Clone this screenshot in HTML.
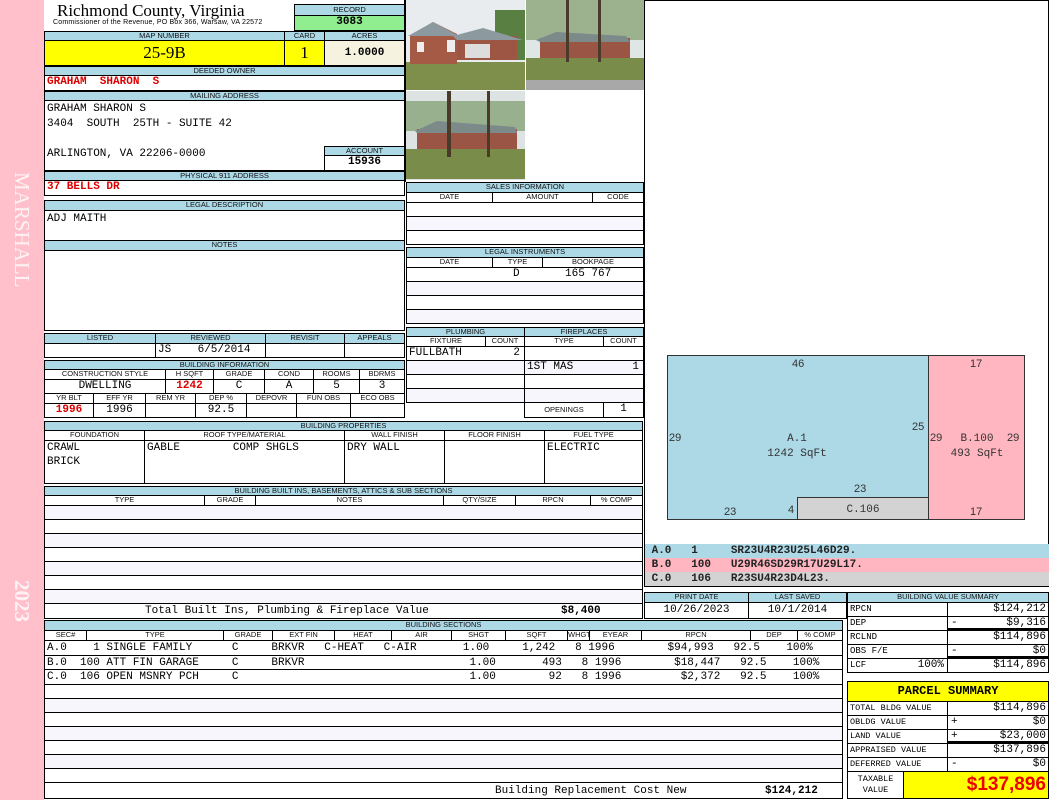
<!DOCTYPE html>
<html><head><meta charset="utf-8"><style>
*{box-sizing:border-box;margin:0;padding:0}
body{width:1050px;height:800px;background:#fff;position:relative;overflow:hidden;font-family:"Liberation Mono",monospace}
.side{position:absolute;left:0;top:0;width:44px;height:800px;background:#ffc0cb}
.vt{position:absolute;color:#fff;font-family:"Liberation Serif",serif;font-size:21px;transform:rotate(90deg);transform-origin:left top;white-space:nowrap;opacity:.8}
.c{position:absolute;border:1px solid #000;font-size:11px;line-height:13px;white-space:nowrap;overflow:hidden;padding:0 2px}
.h{position:absolute;border:1px solid #000;background:#add8e6;font:7.5px/8px "Liberation Sans",sans-serif;text-align:center;white-space:nowrap;overflow:hidden;color:#111}
.s{background:#fff}
.ctr{text-align:center}.r{text-align:right}
.red{color:#d00;font-weight:bold}
.alt{background:#f6f6fc}
</style></head><body>
<div class="side"></div>
<div class="vt" style="left:34px;top:172px">MARSHALL</div>
<div class="vt" style="left:34px;top:580px;font-weight:bold">2023</div>

<div style="position:absolute;left:57px;top:2px;font:17px/18px 'Liberation Serif',serif">Richmond County, Virginia</div>
<div style="position:absolute;left:53px;top:19px;font:7px/8px 'Liberation Sans',sans-serif;letter-spacing:.2px">Commissioner of the Revenue, PO Box 366, Warsaw, VA 22572</div>
<div class="h" style="left:294px;top:4px;width:111px;height:12px;line-height:10px">RECORD</div>
<div class="c ctr" style="left:294px;top:15px;width:111px;height:16px;background:#90ee90;font-weight:bold">3083</div>

<div class="h" style="left:44px;top:31px;width:241px;height:10px">MAP NUMBER</div>
<div class="h" style="left:284px;top:31px;width:41px;height:10px">CARD</div>
<div class="h" style="left:324px;top:31px;width:81px;height:10px">ACRES</div>
<div class="c ctr" style="left:44px;top:40px;width:241px;height:26px;background:#ff0;font:17px/24px 'Liberation Serif',serif">25-9B</div>
<div class="c ctr" style="left:284px;top:40px;width:41px;height:26px;background:#ff0;font:17px/24px 'Liberation Serif',serif">1</div>
<div class="c ctr" style="left:324px;top:40px;width:81px;height:26px;background:#f5f3e0;font-weight:bold;line-height:24px">1.0000</div>

<div class="h" style="left:44px;top:66px;width:361px;height:10px">DEEDED OWNER</div>
<div class="c red" style="left:44px;top:75px;width:361px;height:16px;white-space:pre">GRAHAM  SHARON  S</div>
<div class="h" style="left:44px;top:91px;width:361px;height:10px">MAILING ADDRESS</div>
<div class="c" style="left:44px;top:100px;width:361px;height:71px;line-height:15px;padding-top:1px;white-space:pre">GRAHAM SHARON S
3404  SOUTH  25TH - SUITE 42

ARLINGTON, VA 22206-0000</div>
<div class="h" style="left:324px;top:146px;width:81px;height:10px">ACCOUNT</div>
<div class="c ctr" style="left:324px;top:155px;width:81px;height:16px;font-weight:bold;background:#fff">15936</div>
<div class="h" style="left:44px;top:171px;width:361px;height:10px">PHYSICAL 911 ADDRESS</div>
<div class="c red" style="left:44px;top:180px;width:361px;height:16px">37 BELLS DR</div>
<div class="h" style="left:44px;top:200px;width:361px;height:11px">LEGAL DESCRIPTION</div>
<div class="c" style="left:44px;top:210px;width:361px;height:31px;padding-top:2px">ADJ MAITH</div>
<div class="h" style="left:44px;top:240px;width:361px;height:11px">NOTES</div>
<div class="c" style="left:44px;top:250px;width:361px;height:81px"></div>

<div class="h" style="left:44px;top:333px;width:112px;height:11px">LISTED</div>
<div class="h" style="left:155px;top:333px;width:111px;height:11px">REVIEWED</div>
<div class="h" style="left:265px;top:333px;width:80px;height:11px">REVISIT</div>
<div class="h" style="left:344px;top:333px;width:61px;height:11px">APPEALS</div>
<div class="c" style="left:44px;top:343px;width:112px;height:15px"></div>
<div class="c" style="left:155px;top:343px;width:111px;height:15px">JS&nbsp;&nbsp;&nbsp;&nbsp;6/5/2014</div>
<div class="c" style="left:265px;top:343px;width:80px;height:15px"></div>
<div class="c" style="left:344px;top:343px;width:61px;height:15px"></div>

<div class="h" style="left:44px;top:360px;width:361px;height:10px">BUILDING INFORMATION</div>
<div class="h s" style="left:44px;top:369px;width:122px;height:11px">CONSTRUCTION STYLE</div>
<div class="h s" style="left:165px;top:369px;width:49px;height:11px">H SQFT</div>
<div class="h s" style="left:213px;top:369px;width:52px;height:11px">GRADE</div>
<div class="h s" style="left:264px;top:369px;width:50px;height:11px">COND</div>
<div class="h s" style="left:313px;top:369px;width:47px;height:11px">ROOMS</div>
<div class="h s" style="left:359px;top:369px;width:46px;height:11px">BDRMS</div>
<div class="c ctr" style="left:44px;top:379px;width:122px;height:15px">DWELLING</div>
<div class="c ctr red" style="left:165px;top:379px;width:49px;height:15px">1242</div>
<div class="c ctr" style="left:213px;top:379px;width:52px;height:15px">C</div>
<div class="c ctr" style="left:264px;top:379px;width:50px;height:15px">A</div>
<div class="c ctr" style="left:313px;top:379px;width:47px;height:15px">5</div>
<div class="c ctr" style="left:359px;top:379px;width:46px;height:15px">3</div>
<div class="h s" style="left:44px;top:393px;width:50px;height:11px">YR BLT</div>
<div class="h s" style="left:93px;top:393px;width:53px;height:11px">EFF YR</div>
<div class="h s" style="left:145px;top:393px;width:51px;height:11px">REM YR</div>
<div class="h s" style="left:195px;top:393px;width:52px;height:11px">DEP %</div>
<div class="h s" style="left:246px;top:393px;width:51px;height:11px">DEPOVR</div>
<div class="h s" style="left:296px;top:393px;width:55px;height:11px">FUN OBS</div>
<div class="h s" style="left:350px;top:393px;width:55px;height:11px">ECO OBS</div>
<div class="c ctr red" style="left:44px;top:403px;width:50px;height:15px">1996</div>
<div class="c ctr" style="left:93px;top:403px;width:53px;height:15px">1996</div>
<div class="c" style="left:145px;top:403px;width:51px;height:15px"></div>
<div class="c ctr" style="left:195px;top:403px;width:52px;height:15px">92.5</div>
<div class="c" style="left:246px;top:403px;width:51px;height:15px"></div>
<div class="c" style="left:296px;top:403px;width:55px;height:15px"></div>
<div class="c" style="left:350px;top:403px;width:55px;height:15px"></div>

<div class="h" style="left:44px;top:421px;width:599px;height:10px">BUILDING PROPERTIES</div>
<div class="h s" style="left:44px;top:430px;width:101px;height:11px">FOUNDATION</div>
<div class="h s" style="left:144px;top:430px;width:201px;height:11px">ROOF TYPE/MATERIAL</div>
<div class="h s" style="left:344px;top:430px;width:101px;height:11px">WALL FINISH</div>
<div class="h s" style="left:444px;top:430px;width:101px;height:11px">FLOOR FINISH</div>
<div class="h s" style="left:544px;top:430px;width:99px;height:11px">FUEL TYPE</div>
<div class="c" style="left:44px;top:440px;width:101px;height:44px;line-height:14px">CRAWL<br>BRICK</div>
<div class="c" style="left:144px;top:440px;width:201px;height:44px;line-height:14px">GABLE&nbsp;&nbsp;&nbsp;&nbsp;&nbsp;&nbsp;&nbsp;&nbsp;COMP SHGLS</div>
<div class="c" style="left:344px;top:440px;width:101px;height:44px;line-height:14px">DRY WALL</div>
<div class="c" style="left:444px;top:440px;width:101px;height:44px"></div>
<div class="c" style="left:544px;top:440px;width:99px;height:44px;line-height:14px">ELECTRIC</div>

<div class="h" style="left:44px;top:486px;width:599px;height:10px">BUILDING BUILT INS, BASEMENTS, ATTICS &amp; SUB SECTIONS</div>
<div class="h s" style="left:44px;top:495px;width:161px;height:11px">TYPE</div>
<div class="h s" style="left:204px;top:495px;width:52px;height:11px">GRADE</div>
<div class="h s" style="left:255px;top:495px;width:189px;height:11px">NOTES</div>
<div class="h s" style="left:443px;top:495px;width:73px;height:11px">QTY/SIZE</div>
<div class="h s" style="left:515px;top:495px;width:76px;height:11px">RPCN</div>
<div class="h s" style="left:590px;top:495px;width:53px;height:11px">% COMP</div>
<div class="c alt" style="left:44px;top:505px;width:599px;height:15px"></div>
<div class="c" style="left:44px;top:519px;width:599px;height:15px"></div>
<div class="c alt" style="left:44px;top:533px;width:599px;height:15px"></div>
<div class="c" style="left:44px;top:547px;width:599px;height:15px"></div>
<div class="c alt" style="left:44px;top:561px;width:599px;height:15px"></div>
<div class="c" style="left:44px;top:575px;width:599px;height:15px"></div>
<div class="c alt" style="left:44px;top:589px;width:599px;height:15px"></div>
<div class="c" style="left:44px;top:603px;width:599px;height:16px;line-height:15px"><span style="position:absolute;left:100px">Total Built Ins, Plumbing &amp; Fireplace Value</span><span style="position:absolute;left:516px;font-weight:bold">$8,400</span></div>

<div class="h" style="left:44px;top:620px;width:799px;height:11px">BUILDING SECTIONS</div>
<div class="h s" style="left:44px;top:630px;width:43px;height:11px">SEC#</div>
<div class="h s" style="left:86px;top:630px;width:138px;height:11px">TYPE</div>
<div class="h s" style="left:223px;top:630px;width:50px;height:11px">GRADE</div>
<div class="h s" style="left:272px;top:630px;width:63px;height:11px">EXT FIN</div>
<div class="h s" style="left:334px;top:630px;width:58px;height:11px">HEAT</div>
<div class="h s" style="left:391px;top:630px;width:61px;height:11px">AIR</div>
<div class="h s" style="left:451px;top:630px;width:55px;height:11px">SHGT</div>
<div class="h s" style="left:505px;top:630px;width:63px;height:11px">SQFT</div>
<div class="h s" style="left:567px;top:630px;width:23px;height:11px">WHGT</div>
<div class="h s" style="left:589px;top:630px;width:53px;height:11px">EYEAR</div>
<div class="h s" style="left:641px;top:630px;width:110px;height:11px">RPCN</div>
<div class="h s" style="left:750px;top:630px;width:48px;height:11px">DEP</div>
<div class="h s" style="left:797px;top:630px;width:46px;height:11px">% COMP</div>

<div class="c" style="left:44px;top:640px;width:799px;height:16px"></div>
<div class="c" style="left:44px;top:655px;width:799px;height:15px"></div>
<div class="c" style="left:44px;top:669px;width:799px;height:16px"></div>
<div style="position:absolute;left:47px;top:641px;font-size:11px;line-height:14.5px;white-space:pre">A.0    1 SINGLE FAMILY      C     BRKVR   C-HEAT   C-AIR       1.00     1,242   8 1996        $94,993   92.5    100%
B.0  100 ATT FIN GARAGE     C     BRKVR                         1.00       493   8 1996        $18,447   92.5    100%
C.0  106 OPEN MSNRY PCH     C                                   1.00        92   8 1996         $2,372   92.5    100%</div>
<div class="c" style="left:44px;top:684px;width:799px;height:15px"></div>
<div class="c alt" style="left:44px;top:698px;width:799px;height:15px"></div>
<div class="c" style="left:44px;top:712px;width:799px;height:15px"></div>
<div class="c alt" style="left:44px;top:726px;width:799px;height:15px"></div>
<div class="c" style="left:44px;top:740px;width:799px;height:15px"></div>
<div class="c alt" style="left:44px;top:754px;width:799px;height:15px"></div>
<div class="c" style="left:44px;top:768px;width:799px;height:15px"></div>
<div class="c" style="left:44px;top:782px;width:799px;height:17px;line-height:16px"><span style="position:absolute;left:450px">Building Replacement Cost New</span><span style="position:absolute;left:720px;font-weight:bold">$124,212</span></div>

<!-- photos -->
<svg style="position:absolute;left:405px;top:0" width="240" height="182">
<rect x="0" y="0" width="240" height="182" fill="#fff"/>
<g>
<rect x="0" y="0" width="120" height="90" fill="#e8ecef"/>
<rect x="90" y="10" width="30" height="50" fill="#5a7f42"/>
<rect x="0" y="62" width="120" height="28" fill="#7d8f4a"/>
<polygon points="5,36 28,22 52,34 52,64 5,64" fill="#a45a44"/>
<polygon points="3,36 28,22 54,36" fill="#8c9aa0"/>
<rect x="52" y="36" width="60" height="24" fill="#9d5643"/>
<polygon points="48,36 78,28 118,40 52,40" fill="#8c9aa0"/>
<rect x="12" y="42" width="7" height="10" fill="#eee"/><rect x="42" y="40" width="8" height="12" fill="#eee"/><rect x="60" y="44" width="25" height="14" fill="#ddd"/>
</g>
<g transform="translate(121,0)">
<rect x="0" y="0" width="119" height="90" fill="#dfe6e6"/>
<rect x="0" y="0" width="119" height="40" fill="#6f8f55" opacity=".6"/>
<rect x="14" y="38" width="90" height="22" fill="#9a5544"/>
<polygon points="10,40 30,32 100,36 104,42 14,42" fill="#7d8a8a"/>
<rect x="0" y="58" width="119" height="24" fill="#7a8c4a"/>
<rect x="0" y="80" width="119" height="10" fill="#a8a8a8"/>
<rect x="40" y="0" width="3" height="62" fill="#4a3a2a"/><rect x="72" y="0" width="3" height="62" fill="#4a3a2a"/>
</g>
<g transform="translate(0,91)">
<rect x="0" y="0" width="120" height="89" fill="#dde3e3"/>
<rect x="0" y="10" width="120" height="30" fill="#6b8d55" opacity=".6"/>
<rect x="12" y="38" width="100" height="22" fill="#9a5544"/>
<polygon points="10,40 32,30 110,36 112,42 12,42" fill="#7d8a8a"/>
<rect x="0" y="58" width="120" height="30" fill="#7a8c4a"/>
<rect x="42" y="0" width="4" height="66" fill="#4a3a2a"/><rect x="82" y="0" width="3" height="66" fill="#4a3a2a"/>
</g>
</svg>
<div style="position:absolute;left:404px;top:0;width:2px;height:182px;background:#000"></div>
<div class="c" style="left:644px;top:0;width:405px;height:546px"></div>

<!-- sales -->
<div class="h" style="left:406px;top:182px;width:238px;height:11px">SALES INFORMATION</div>
<div class="h s" style="left:406px;top:192px;width:87px;height:11px">DATE</div>
<div class="h s" style="left:492px;top:192px;width:101px;height:11px">AMOUNT</div>
<div class="h s" style="left:592px;top:192px;width:52px;height:11px">CODE</div>
<div class="c" style="left:406px;top:202px;width:238px;height:15px"></div>
<div class="c alt" style="left:406px;top:216px;width:238px;height:15px"></div>
<div class="c" style="left:406px;top:230px;width:238px;height:15px"></div>
<div class="h" style="left:406px;top:247px;width:238px;height:11px">LEGAL INSTRUMENTS</div>
<div class="h s" style="left:406px;top:257px;width:87px;height:11px">DATE</div>
<div class="h s" style="left:492px;top:257px;width:51px;height:11px">TYPE</div>
<div class="h s" style="left:542px;top:257px;width:102px;height:11px">BOOKPAGE</div>
<div class="c" style="left:406px;top:267px;width:238px;height:15px"><span style="position:absolute;left:106px">D</span><span style="position:absolute;left:158px">165 767</span></div>
<div class="c alt" style="left:406px;top:281px;width:238px;height:15px"></div>
<div class="c" style="left:406px;top:295px;width:238px;height:15px"></div>
<div class="c alt" style="left:406px;top:309px;width:238px;height:15px"></div>

<!-- plumbing / fireplaces -->
<div class="h" style="left:406px;top:327px;width:119px;height:10px">PLUMBING</div>
<div class="h" style="left:524px;top:327px;width:120px;height:10px">FIREPLACES</div>
<div class="h s" style="left:406px;top:336px;width:80px;height:11px">FIXTURE</div>
<div class="h s" style="left:485px;top:336px;width:40px;height:11px">COUNT</div>
<div class="h s" style="left:524px;top:336px;width:80px;height:11px">TYPE</div>
<div class="h s" style="left:603px;top:336px;width:41px;height:11px">COUNT</div>
<div class="c" style="left:406px;top:346px;width:119px;height:15px">FULLBATH<span style="position:absolute;right:4px">2</span></div>
<div class="c alt" style="left:406px;top:360px;width:119px;height:15px"></div>
<div class="c" style="left:406px;top:374px;width:119px;height:15px"></div>
<div class="c alt" style="left:406px;top:388px;width:119px;height:15px"></div>
<div class="c" style="left:524px;top:346px;width:120px;height:15px"></div>
<div class="c alt" style="left:524px;top:360px;width:120px;height:15px">1ST MAS<span style="position:absolute;right:4px">1</span></div>
<div class="c" style="left:524px;top:374px;width:120px;height:15px"></div>
<div class="c alt" style="left:524px;top:388px;width:120px;height:15px"></div>
<div class="h s" style="left:524px;top:402px;width:80px;height:16px;line-height:14px">OPENINGS</div>
<div class="c ctr" style="left:603px;top:402px;width:41px;height:16px">1</div>

<!-- sketch -->
<svg style="position:absolute;left:644px;top:340px" width="404" height="190" font-family="Liberation Sans" font-size="11" fill="#333">
<rect x="23.5" y="15.5" width="261" height="164" fill="#add8e6" stroke="#333"/>
<rect x="284.5" y="15.5" width="96" height="164" fill="#ffb6c1" stroke="#333"/>
<rect x="153.5" y="157.5" width="131" height="22" fill="#d3d3d3" stroke="#333"/>
<text x="148" y="27">46</text><text x="326" y="27">17</text>
<text x="25" y="101">29</text><text x="268" y="90">25</text>
<text x="286" y="101">29</text><text x="363" y="101">29</text>
<text x="210" y="152">23</text><text x="80" y="175">23</text><text x="144" y="173">4</text><text x="326" y="175">17</text>
<g font-family="Liberation Mono" font-size="11">
<text x="153" y="101" text-anchor="middle">A.1</text><text x="153" y="116" text-anchor="middle">1242 SqFt</text>
<text x="333" y="101" text-anchor="middle">B.100</text><text x="333" y="116" text-anchor="middle">493 SqFt</text>
<text x="219" y="172" text-anchor="middle">C.106</text>
</g>
</svg>
<div class="c" style="left:644px;top:544px;width:405px;height:43px;border-width:1px 0 1px 1px;padding:0"></div>
<div style="position:absolute;left:645px;top:544px;width:404px;height:14px;background:#add8e6;font:bold 11px/14px 'Liberation Mono';white-space:pre;color:#222"> A.0   1     SR23U4R23U25L46D29.</div>
<div style="position:absolute;left:645px;top:558px;width:404px;height:14px;background:#ffb6c1;font:bold 11px/14px 'Liberation Mono';white-space:pre;color:#222"> B.0   100   U29R46SD29R17U29L17.</div>
<div style="position:absolute;left:645px;top:572px;width:404px;height:14px;background:#d3d3d3;font:bold 11px/14px 'Liberation Mono';white-space:pre;color:#222"> C.0   106   R23SU4R23D4L23.</div>

<div class="h" style="left:644px;top:592px;width:105px;height:11px">PRINT DATE</div>
<div class="h" style="left:748px;top:592px;width:99px;height:11px">LAST SAVED</div>
<div class="c ctr" style="left:644px;top:602px;width:105px;height:17px;line-height:15px">10/26/2023</div>
<div class="c ctr" style="left:748px;top:602px;width:99px;height:17px;line-height:15px">10/1/2014</div>

<div class="h" style="left:847px;top:592px;width:202px;height:11px">BUILDING VALUE SUMMARY</div>
<div style="position:absolute;left:847px;top:602px;width:202px;font-size:11px">
<div class="c" style="left:0;top:0;width:101px;height:15px;font-size:9px">RPCN</div><div class="c r" style="left:100px;top:0;width:102px;height:15px">$124,212</div>
<div class="c" style="left:0;top:14px;width:101px;height:15px;font-size:9px">DEP</div><div class="c r" style="left:100px;top:14px;width:102px;height:15px;border-bottom-width:3px"><span style="position:absolute;left:3px">-</span>$9,316</div>
<div class="c" style="left:0;top:28px;width:101px;height:15px;font-size:9px">RCLND</div><div class="c r" style="left:100px;top:28px;width:102px;height:15px">$114,896</div>
<div class="c" style="left:0;top:42px;width:101px;height:15px;font-size:9px">OBS F/E</div><div class="c r" style="left:100px;top:42px;width:102px;height:15px;border-bottom-width:3px"><span style="position:absolute;left:3px">-</span>$0</div>
<div class="c" style="left:0;top:56px;width:101px;height:15px;font-size:9px">LCF<span style="position:absolute;right:3px;font-size:11px">100%</span></div><div class="c r" style="left:100px;top:56px;width:102px;height:15px">$114,896</div>
</div>

<div class="c ctr" style="left:847px;top:681px;width:202px;height:21px;background:#ff0;font:bold 12px/19px 'Liberation Mono'">PARCEL SUMMARY</div>
<div style="position:absolute;left:847px;top:701px;width:202px;height:70px">
<div class="c" style="left:0;top:0;width:101px;height:15px;font-size:8.5px">TOTAL BLDG VALUE</div><div class="c r" style="left:100px;top:0;width:102px;height:15px">$114,896</div>
<div class="c" style="left:0;top:14px;width:101px;height:15px;font-size:8.5px">OBLDG VALUE</div><div class="c r" style="left:100px;top:14px;width:102px;height:15px"><span style="position:absolute;left:3px">+</span>$0</div>
<div class="c" style="left:0;top:28px;width:101px;height:15px;font-size:8.5px">LAND VALUE</div><div class="c r" style="left:100px;top:28px;width:102px;height:15px;border-bottom-width:3px"><span style="position:absolute;left:3px">+</span>$23,000</div>
<div class="c" style="left:0;top:42px;width:101px;height:15px;font-size:8.5px">APPRAISED VALUE</div><div class="c r" style="left:100px;top:42px;width:102px;height:15px">$137,896</div>
<div class="c" style="left:0;top:56px;width:101px;height:15px;font-size:8.5px">DEFERRED VALUE</div><div class="c r" style="left:100px;top:56px;width:102px;height:15px"><span style="position:absolute;left:3px">-</span>$0</div>
</div>
<div class="c ctr" style="left:847px;top:771px;width:57px;height:28px;font-size:8.5px;line-height:11px;padding-top:2px">TAXABLE<br>VALUE</div>
<div class="c r" style="left:903px;top:771px;width:146px;height:28px;background:#ff0;color:#e00;font:bold 19px/26px 'Liberation Sans',sans-serif">$137,896</div>
</body></html>
